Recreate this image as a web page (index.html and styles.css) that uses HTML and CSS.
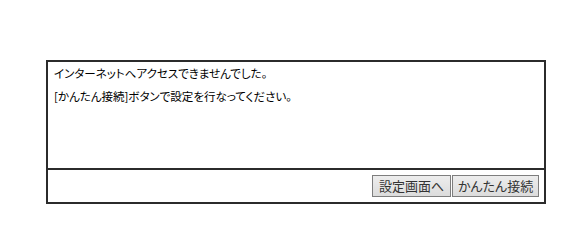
FILE: index.html
```html
<!DOCTYPE html>
<html lang="ja">
<head>
<meta charset="utf-8">
<title>接続エラー</title>
<link rel="stylesheet" href="styles.css">
</head>
<body>
<div class="panel">
  <div class="message">
    <p>インターネットへアクセスできませんでした。</p>
    <p>[かんたん接続]ボタンで設定を行なってください。</p>
  </div>
  <div class="actions">
    <button class="btn btn-settings" type="button">設定画面へ</button>
    <button class="btn btn-easy" type="button">かんたん接続</button>
  </div>
</div>
</body>
</html>
```

FILE: styles.css
```css
html, body {
  margin: 0;
  padding: 0;
  background: #ffffff;
}

body {
  padding: 60px 0 0 46px;
  font-family: "Noto Sans CJK JP", "DejaVu Sans", sans-serif;
}

.panel {
  width: 496px;
  border: 2px solid #2b2b2b;
  display: flex;
  flex-direction: column;
}

.message {
  height: 106px;
  padding: 0 0 0 6px;
  border-bottom: 2px solid #2b2b2b;
  font-size: 11.5px;
  line-height: 23px;
  color: #000;
  font-feature-settings: "palt";
}

.message p {
  margin: 0;
}

.actions {
  height: 32px;
  display: flex;
  justify-content: flex-end;
  align-items: center;
  gap: 1px;
  padding: 0 5px 0 0;
}

.btn {
  height: 22px;
  margin: 0;
  padding: 0;
  border: 1px solid #7e7e7e;
  border-radius: 0;
  background: linear-gradient(#ededed, #dcdcdc);
  font-family: "Noto Sans CJK JP", "DejaVu Sans", sans-serif;
  font-size: 13px;
  line-height: 20px;
  color: #333;
  text-align: center;
}

.btn-settings {
  width: 79px;
}

.btn-easy {
  width: 87px;
  font-feature-settings: "palt";
}
```
